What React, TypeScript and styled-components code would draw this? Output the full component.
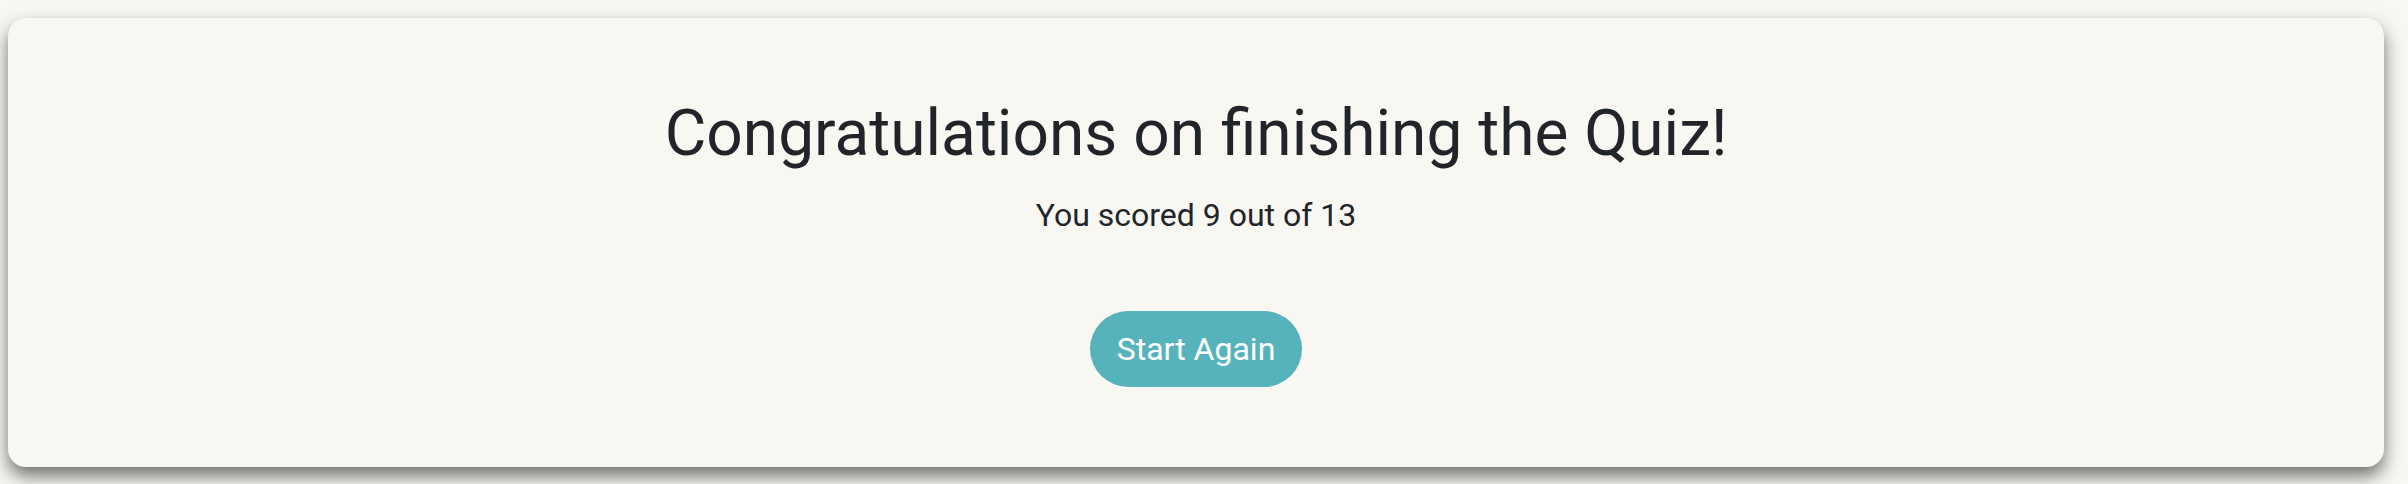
import React from "react";
import styled, { createGlobalStyle } from "styled-components";

const GlobalStyle = createGlobalStyle`
    body {
      margin: 0;
      background-color: #f8f7f2;
      font-family: Roboto, "Liberation Sans", sans-serif;
      color: #212529;
    }
`;

const Page = styled.div`
    box-sizing: border-box;
    min-height: 100vh;
    padding: 18px 24px 0 8px;
`;

const ResultCard = styled.div`
    display: flex;
    flex-direction: column;
    align-items: center;
    padding: 78px 20px 80px;

    background-color: #f8f7f2;
    border-radius: 18px;
    box-shadow: 0 9px 18px rgba(0, 0, 0, 0.55);
`;

const Title = styled.h1`
    margin: 0;
    font-size: 64px;
    font-weight: 400;
    line-height: 1.2;
`;

const Score = styled.p`
    margin: 18px 0 0;
    font-size: 32px;
    line-height: 1.5;
`;

const RestartButton = styled.button`
    margin-top: 72px;
    padding: 14px 27px;

    border: none;
    border-radius: 38px;
    background-color: #57b3bb;
    color: #fff;

    font-family: inherit;
    font-size: 32px;
    line-height: 1.5;
    cursor: pointer;
`;

export default function App() {
    const score = 9;
    const total = 13;

    return (
        <>
            <GlobalStyle/>
            <Page>
                <ResultCard>
                    <Title>Congratulations on finishing the Quiz!</Title>
                    <Score>You scored {score} out of {total}</Score>
                    <RestartButton>Start Again</RestartButton>
                </ResultCard>
            </Page>
        </>
    );
}
